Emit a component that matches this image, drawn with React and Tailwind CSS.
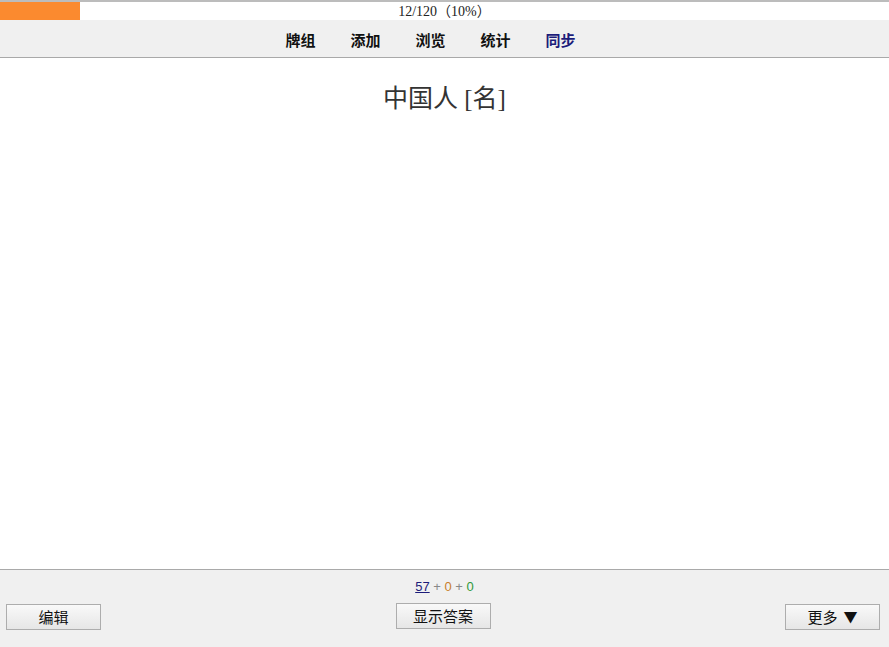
const serif = { fontFamily: '"Liberation Serif", "Noto Sans CJK SC", serif' };

const navItems = [
  { label: "牌组", color: "text-[#111111]" },
  { label: "添加", color: "text-[#111111]" },
  { label: "浏览", color: "text-[#111111]" },
  { label: "统计", color: "text-[#111111]" },
  { label: "同步", color: "text-[#1c1c7a]" },
];

function Button({ children, className = "" }) {
  return (
    <button
      type="button"
      className={`flex h-[26px] w-[95px] items-center justify-center gap-[6px] border border-[#adadad] bg-gradient-to-b from-[#f9f9f9] to-[#e6e6e6] pb-[2px] text-[15px] text-[#111] leading-none ${className}`}
      style={{ fontFamily: '"Noto Sans CJK SC", sans-serif' }}
    >
      {children}
    </button>
  );
}

export default function App() {
  return (
    <div className="flex h-[647px] w-[889px] flex-col bg-white" style={{ fontFamily: '"Noto Sans CJK SC", sans-serif' }}>
      <div className="border-t-2 border-[#bcbcbc]">
        <div className="relative h-[18px] bg-white">
          <div className="absolute left-0 top-0 h-full w-[80px] bg-[#fb8a2f]" />
          <div className="relative pt-[1px] text-center text-[14px] leading-[18px] text-[#222]" style={serif}>
            12/120（10%）
          </div>
        </div>
      </div>
      <nav className="flex h-[38px] items-center justify-center gap-[35px] border-b border-[#a9a9a9] bg-[#f0f0f0] pt-[3px] pr-[28px]">
        {navItems.map((item) => (
          <span key={item.label} className={`text-[15px] font-bold ${item.color}`}>
            {item.label}
          </span>
        ))}
      </nav>
      <main className="flex-1 bg-white pt-[22px] text-center">
        <div className="text-[25px] text-[#333]" style={serif}>
          中国人 [名]
        </div>
      </main>
      <footer className="h-[78px] border-t border-[#a9a9a9] bg-[#f0f0f0]">
        <div className="pt-[8px] text-center text-[13px] leading-[17px]" style={{ fontFamily: '"Liberation Sans", sans-serif' }}>
          <span className="text-[#1c1c7a] underline">57</span>
          <span className="text-[#888]"> + </span>
          <span className="text-[#c87f2c]">0</span>
          <span className="text-[#888]"> + </span>
          <span className="text-[#2f9a3a]">0</span>
        </div>
        <div className="mt-[8px] flex items-start justify-between px-[6px]">
          <Button className="mt-[1px]">编辑</Button>
          <Button>显示答案</Button>
          <Button className="mt-[1px] mr-[3px]">
            <span>更多</span>
            <span className="text-[14px]">▼</span>
          </Button>
        </div>
      </footer>
    </div>
  );
}
